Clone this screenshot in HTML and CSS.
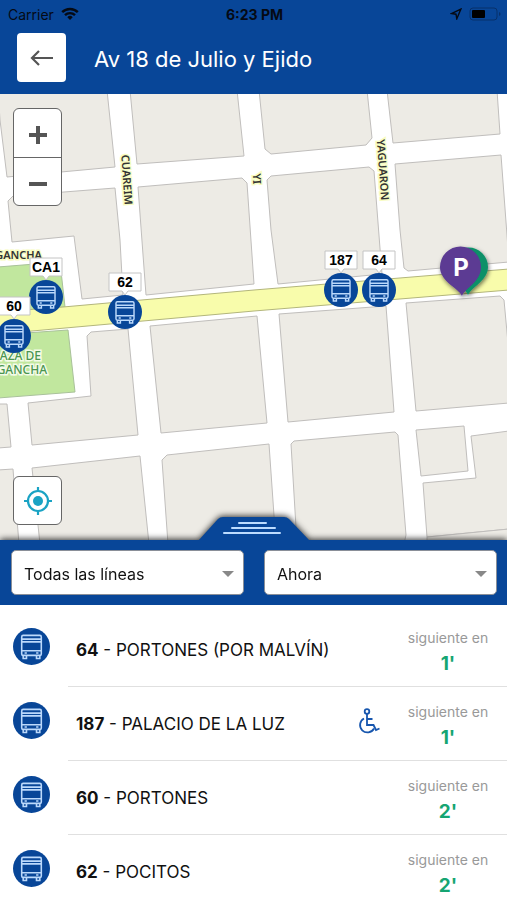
FILE: index.html
```html
<!DOCTYPE html>
<html lang="es">
<head>
  <meta charset="UTF-8">
  <meta name="viewport" content="width=device-width, initial-scale=1.0">
  <title>Av 18 de Julio y Ejido</title>
  <link rel="stylesheet" href="styles.css">
</head>
<body>
  <!-- Shared icons -->
  <svg class="sprite" aria-hidden="true">
    <symbol id="bus" viewBox="-20 -20 40 40">
      <circle r="20" fill="#084698"/>
      <g fill="none" stroke="#bcd9fb" stroke-width="1.700">
        <rect x="-10.600" y="-12" width="21.200" height="21.600" rx="1.600"/>
        <path d="M-10.600 -8H10.600M-10.600 -5H10.600M-10.600 4.500H10.600M-7.500 7H-5M5 7H7.500"/>
        <path d="M-9 10V13H-5.400V10M5.400 10V13H9V10"/>
      </g>
    </symbol>
  </svg>

  <div class="screen">
    <header class="header">
      <div class="status-bar">
        <div class="carrier">
          <span>Carrier</span>
          <svg width="18" height="14" viewBox="0 0 18 14" fill="none" stroke="#050a14" stroke-width="2.400">
            <path d="M1.200 5.200a11 11 0 0 1 15.600 0M4 8.200a7 7 0 0 1 10 0"/>
            <path d="M9 13l-2.700-2.800a3.800 3.800 0 0 1 5.400 0z" fill="#050a14" stroke="none"/>
          </svg>
        </div>
        <strong>6:23 PM</strong>
        <div class="battery">
          <svg width="12" height="12" viewBox="0 0 12 12" fill="none" stroke="#050a14" stroke-width="1.400">
            <path d="M10.800 1.200L1.500 5.500L6 6.200L6.800 10.800z"/>
          </svg>
          <svg width="32" height="14" viewBox="0 0 32 14">
            <rect x="1" y="1" width="27" height="12" rx="3" fill="none" stroke="#07306a"/>
            <rect x="3" y="3" width="13" height="8" rx="1" fill="#000"/>
            <path d="M30 5v4q1.500-.5 1.500-2T30 5z" fill="#07306a"/>
          </svg>
        </div>
      </div>
      <div class="title-bar">
        <button class="back-button" type="button" aria-label="Volver">
          <svg width="24" height="16" viewBox="0 0 24 16" fill="none" stroke="#555" stroke-width="2.200">
            <path d="M23 8H2M9 1L2 8l7 7"/>
          </svg>
        </button>
        <h1>Av 18 de Julio y Ejido</h1>
      </div>
    </header>

    <section class="map">
      <svg class="map-canvas" viewBox="0 0 507 446">
        <defs>
          <filter id="pin-shadow" x="-50%" y="-50%" width="200%" height="200%">
            <feDropShadow dx="1" dy="2" stdDeviation="2" flood-color="#000" flood-opacity=".55"/>
          </filter>
        </defs>

        <!-- City blocks -->
        <g class="block">
          <path d="M-2 -4H107L115 73L7 83L0 26z"/>
          <path d="M130 -4L137 70L244 62L237 -4z"/>
          <path d="M259 -4L265 55L271 60L366 51L372 44L367 -4z"/>
          <path d="M387 -4L393 49L500 40L497 -4z"/>
          <path d="M8 107L13 102L115 94L120 146L123 201L82 205L74 142L12 148z"/>
          <path d="M138 93L242 84L247 89L254 190L146 201z"/>
          <path d="M267 86L271 82L369 73L374 77L382 180L278 190L271 136z"/>
          <path d="M395 70L501 61L509 168L408 177L404 174L400 136z"/>
          <path d="M87 242L91 238L128 235L138 341L32 351L28 309L91 302z"/>
          <path d="M-2 310H7L11 353L-2 354z"/>
          <path d="M150 232L257 222L267 329L161 339z"/>
          <path d="M279 220L386 212L394 318L288 328z"/>
          <path d="M406 209L500 202L504 206L509 260V309L416 317z"/>
          <path d="M-2 376L13 375L19 450H-2z"/>
          <path d="M32 374L140 362L149 450H40z"/>
          <path d="M162 366L167 361L269 350L276 450H168z"/>
          <path d="M291 350L294 347L395 338L398 341L406 441L404 450H297z"/>
          <path d="M416 336L464 332L468 377L421 382z"/>
          <path d="M471 342L509 337V435L427 443L423 389L476 384z"/>
          <path d="M427 443L509 435V450H427z"/>
        </g>

        <!-- Plaza -->
        <g class="park">
          <path d="M-2 173L60 168L65 213L-2 219z"/>
          <path d="M-2 241L68 236L75 298L-2 304z"/>
        </g>

        <path class="avenue" d="M-2 218L63 213L254 196L509 175V196L254 217L32 237L-2 240z"/>

        <!-- Street names -->
        <g class="street-name" text-anchor="middle">
          <text transform="translate(123 86) rotate(86)">CUAREIM</text>
          <text transform="translate(253 85) rotate(86)">YI</text>
          <text transform="translate(379 76) rotate(86)">YAGUARON</text>
        </g>
        <text class="street-name" x="42" y="165" text-anchor="end">GANCHA</text>
        <g class="park-name" text-anchor="end">
          <text x="41" y="266">AZA DE</text>
          <text x="47" y="280">GANCHA</text>
        </g>

        <!-- Stops -->
        <g class="stop" transform="translate(46 203)">
          <use href="#bus" x="-17" y="-17" width="34" height="34"/>
          <path d="M-16 -39H16V-21H3L0 -17L-3 -21H-16z"/>
          <text y="-25">CA1</text>
        </g>
        <g class="stop" transform="translate(14 242)">
          <use href="#bus" x="-17" y="-17" width="34" height="34"/>
          <path d="M-16 -39H16V-21H3L0 -17L-3 -21H-16z"/>
          <text y="-25">60</text>
        </g>
        <g class="stop" transform="translate(125 218)">
          <use href="#bus" x="-17" y="-17" width="34" height="34"/>
          <path d="M-16 -39H16V-21H3L0 -17L-3 -21H-16z"/>
          <text y="-25">62</text>
        </g>
        <g class="stop" transform="translate(341 196)">
          <use href="#bus" x="-17" y="-17" width="34" height="34"/>
          <path d="M-16 -39H16V-21H3L0 -17L-3 -21H-16z"/>
          <text y="-25">187</text>
        </g>
        <g class="stop" transform="translate(379 196)">
          <use href="#bus" x="-17" y="-17" width="34" height="34"/>
          <path d="M-16 -39H16V-21H3L0 -17L-3 -21H-16z"/>
          <text y="-25">64</text>
        </g>

        <!-- Selected place -->
        <g transform="translate(461 173)">
          <g filter="url(#pin-shadow)">
            <path d="M7 28C4 20-12 13-12 0a19 19 0 0 1 39 0C27 13 11 20 7 28z" fill="#0a9068"/>
            <path d="M1 29C-2 21-21 15-21 0a20.500 20.500 0 0 1 41 0C20 15 4 21 1 29z" fill="#5b3a93"/>
          </g>
          <text class="pin-letter" y="9">P</text>
        </g>
      </svg>

      <div class="zoom-controls">
        <button type="button" aria-label="Acercar">
          <svg width="18" height="18" viewBox="0 0 18 18" stroke="#555" stroke-width="4"><path d="M0 9H18M9 0V18"/></svg>
        </button>
        <button type="button" aria-label="Alejar">
          <svg width="18" height="18" viewBox="0 0 18 18" stroke="#555" stroke-width="4"><path d="M0 9H18"/></svg>
        </button>
      </div>

      <button class="locate-button" type="button" aria-label="Mi ubicación">
        <svg width="28" height="28" viewBox="0 0 28 28" fill="none" stroke="#1aa3c4" stroke-width="2.200">
          <circle cx="14" cy="14" r="10"/>
          <circle cx="14" cy="14" r="5" fill="#1aa3c4" stroke="none"/>
          <path d="M14 0V4M14 24V28M0 14H4M24 14H28"/>
        </svg>
      </button>
    </section>

    <section class="filters">
      <button class="drawer-handle" type="button" aria-label="Mostrar lista">
        <svg width="112" height="25" viewBox="0 0 112 25">
          <path d="M0 25L20 3Q22 1 25 1H86Q89 1 91 3L112 25z" fill="#084698"/>
          <path d="M41 7H68M34 12H77M26 17H82" stroke="#bcdcff" stroke-width="2" stroke-linecap="round"/>
        </svg>
      </button>
      <div class="select-box">
        <select aria-label="Línea">
          <option>Todas las líneas</option>
        </select>
      </div>
      <div class="select-box">
        <select aria-label="Horario">
          <option>Ahora</option>
        </select>
      </div>
    </section>

    <ul class="lines">
      <li class="line">
        <svg class="line-icon"><use href="#bus"/></svg>
        <div class="line-content">
          <p class="line-name"><b>64</b> - PORTONES (POR MALVÍN)</p>
          <div class="arrival">
            <span>siguiente en</span>
            <strong>1'</strong>
          </div>
        </div>
      </li>
      <li class="line">
        <svg class="line-icon"><use href="#bus"/></svg>
        <div class="line-content">
          <p class="line-name"><b>187</b> - PALACIO DE LA LUZ</p>
          <svg class="accessible" viewBox="0 0 22 26" fill="none" stroke="#1756ae" stroke-width="1.800">
            <circle cx="9" cy="3.500" r="2.300"/>
            <path d="M9 6V17H15.500L18 22L21.500 20.500M9 11H14.500"/>
            <path d="M6 10.500A7.400 7.400 0 1 0 16 20.500"/>
          </svg>
          <div class="arrival">
            <span>siguiente en</span>
            <strong>1'</strong>
          </div>
        </div>
      </li>
      <li class="line">
        <svg class="line-icon"><use href="#bus"/></svg>
        <div class="line-content">
          <p class="line-name"><b>60</b> - PORTONES</p>
          <div class="arrival">
            <span>siguiente en</span>
            <strong>2'</strong>
          </div>
        </div>
      </li>
      <li class="line">
        <svg class="line-icon"><use href="#bus"/></svg>
        <div class="line-content">
          <p class="line-name"><b>62</b> - POCITOS</p>
          <div class="arrival">
            <span>siguiente en</span>
            <strong>2'</strong>
          </div>
        </div>
      </li>
    </ul>
  </div>
</body>
</html>
```
FILE: styles.css
```css
* {
  box-sizing: border-box;
}

body {
  margin: 0;
  font-family: Inter, "Liberation Sans", sans-serif;
  color: #111;
  background-color: #fff;
}

button {
  padding: 0;
  border: none;
  background: none;
  cursor: pointer;
}

svg {
  display: block;
}

.sprite {
  position: absolute;
  width: 0;
  height: 0;
}

.screen {
  display: flex;
  flex-direction: column;
  height: 100vh;
  overflow: hidden;
}

/* Header */
.header {
  flex: none;
  background-color: #084698;
}

.status-bar {
  display: grid;
  grid-template-columns: 1fr auto 1fr;
  align-items: center;
  height: 28px;
  padding: 0 6px 0 8px;
  font-size: 14px;
  color: #050a14;
}

.carrier,
.battery {
  display: flex;
  align-items: center;
  gap: 7px;
}

.battery {
  justify-content: flex-end;
}

.title-bar {
  display: flex;
  align-items: center;
  gap: 28px;
  padding: 5px 17px 12px;
}

.title-bar h1 {
  margin: 0;
  padding-top: 2px;
  font-size: 22px;
  font-weight: 400;
  color: #fff;
}

.back-button {
  display: flex;
  align-items: center;
  justify-content: center;
  width: 49px;
  height: 49px;
  border-radius: 4px;
  background-color: #fff;
}

/* Map */
.map {
  position: relative;
  flex: none;
  background-color: #fff;
}

.map-canvas {
  width: 100%;
  height: auto;
  overflow: hidden;
}

.block {
  fill: #edebe5;
  stroke: #c0bebc;
}

.park {
  fill: #c1e79e;
  stroke: #a9c19a;
}

.avenue {
  fill: #f8fcab;
  stroke: #b3b67c;
}

.street-name,
.park-name {
  font-family: "Noto Sans", sans-serif;
  font-size: 11px;
  font-weight: 600;
  fill: #333;
  stroke: #f8fcc0;
  stroke-width: 3px;
  paint-order: stroke;
}

.park-name {
  font-size: 12px;
  font-weight: 500;
  fill: #4a9550;
  stroke: #f3fbe8;
}

.stop path {
  fill: #fff;
  stroke: #c4c4c4;
}

.stop text {
  font-family: "Liberation Sans", Arial, sans-serif;
  font-size: 14px;
  font-weight: 700;
  text-anchor: middle;
}

.pin-letter {
  font-size: 24px;
  font-weight: 700;
  text-anchor: middle;
  fill: #fff;
}

.zoom-controls,
.locate-button {
  position: absolute;
  left: 13px;
  width: 49px;
  border: 1px solid #666;
  border-radius: 6px;
  background-color: #fff;
}

.zoom-controls {
  top: 14px;
}

.zoom-controls button,
.locate-button {
  display: flex;
  align-items: center;
  justify-content: center;
  height: 49px;
}

.zoom-controls button {
  width: 100%;
  height: 48px;
  padding-top: 4px;
}

.zoom-controls button + button {
  border-top: 1px solid #666;
}

.locate-button {
  bottom: 15px;
}

/* Filters drawer */
.filters {
  position: relative;
  display: flex;
  flex: none;
  gap: 20px;
  padding: 10px 10px 10px 11px;
  background-color: #084698;
  filter: drop-shadow(0 -1px 3px #333);
}

.drawer-handle {
  position: absolute;
  bottom: 100%;
  left: 50%;
  margin-bottom: -1px;
  transform: translateX(-50%);
}

.select-box {
  position: relative;
  flex: 1;
}

.select-box::after {
  content: "";
  position: absolute;
  top: 21px;
  right: 10px;
  border: 6px solid transparent;
  border-top-color: #888;
  border-bottom: none;
  pointer-events: none;
}

select {
  display: block;
  width: 100%;
  height: 45px;
  padding: 2px 12px 0;
  border: 1px solid #8a8f98;
  border-radius: 5px;
  appearance: none;
  background-color: #fff;
  font: inherit;
  font-size: 16px;
  color: #111;
}

/* Lines list */
.lines {
  position: relative;
  flex: 1;
  margin: 0;
  padding: 8px 0 0;
  overflow-y: auto;
  scrollbar-width: none;
  list-style: none;
  background-color: #fff;
}

.line {
  display: flex;
  gap: 18px;
  height: 74px;
  padding-left: 13px;
}

.line-icon {
  flex: none;
  width: 37px;
  height: 37px;
  margin-top: 15px;
}

.line-content {
  display: flex;
  flex: 1;
  align-items: center;
  padding: 0 17px 0 8px;
  border-bottom: 1px solid #e0e0e0;
}

.line-name {
  flex: 1;
  margin: 0;
  font-size: 17px;
}

.accessible {
  width: 22px;
  height: 26px;
  margin: 0 26px 6px 0;
}

.arrival {
  display: flex;
  flex-direction: column;
  align-items: center;
  gap: 2px;
  min-width: 84px;
  padding-top: 2px;
  font-size: 14px;
  line-height: 24px;
  color: #999;
}

.arrival strong {
  font-size: 19px;
  color: #15a572;
}
```
